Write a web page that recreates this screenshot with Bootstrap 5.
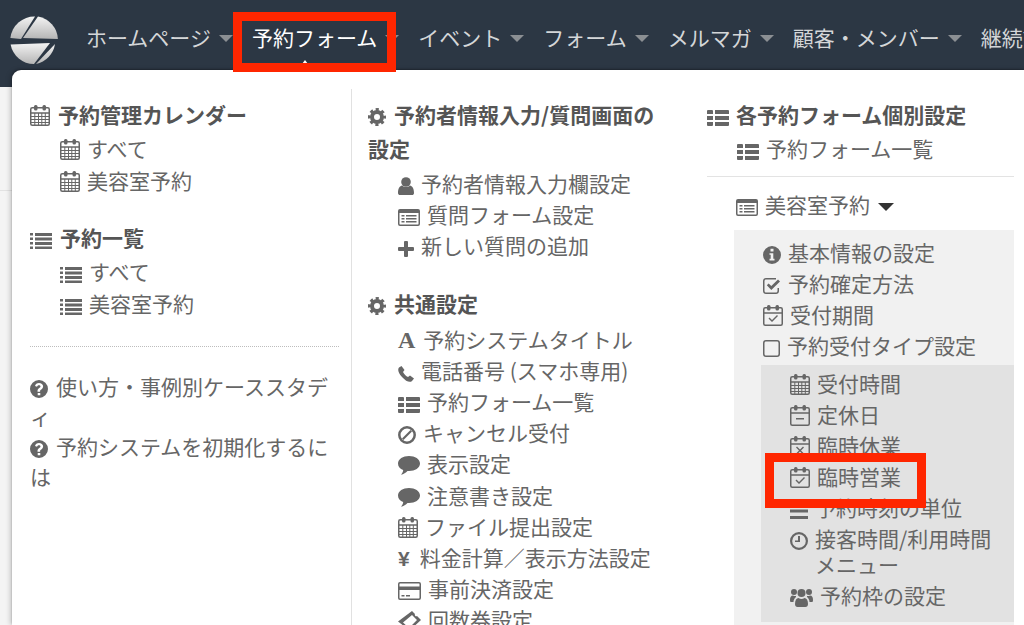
<!DOCTYPE html>
<html lang="ja">
<head>
<meta charset="utf-8">
<title>予約フォーム</title>
<link href="https://cdn.jsdelivr.net/npm/bootstrap@5.3.0/dist/css/bootstrap.min.css" rel="stylesheet">
<style>
html,body{height:625px;overflow:hidden}
body{background:#f4f4f4;font-family:"Noto Sans CJK JP","Liberation Sans",sans-serif;font-size:21px;color:#666;position:relative}
.topbar{height:87px;background:#2c3744;padding:0 0 0 10px;align-items:flex-start;flex-wrap:nowrap;border:0;overflow:hidden}
.logo-mark{margin-top:16px;flex:none}
.topnav{margin-left:28px;margin-top:16px;flex-wrap:nowrap;white-space:nowrap}
.navbar-expand .topnav .nav-link{color:#d4d6d8;font-size:21px;line-height:42px;padding:0;display:flex;align-items:center}
.navbar-expand .topnav .nav-link.active{color:#fff}
.topnav .nav-link::after{border-top:7px solid #8b8f93;border-left:7px solid transparent;border-right:7px solid transparent;border-bottom:0;margin:3px 19px 0 8px;vertical-align:0}
.page-rule{position:absolute;top:190px;left:0;width:12px;border-top:1px solid #e2e2e2}
.mega{position:absolute;display:block;top:70px;left:12px;width:1012px;height:555px;margin:0;background:#fff;border:0;border-radius:9px 0 0 0;padding:19px 0 0;box-shadow:-2px 0 5px rgba(0,0,0,.18),0 -1px 2px rgba(0,0,0,.25);color:#666;font-size:21px;overflow:hidden}
.mega-row{display:flex;align-items:flex-start}
.pane-a{width:340px;padding:8px 13px 0 18px;border-right:1px solid #e1e1e1;height:600px;flex:none}
.pane-b{width:355px;padding:8px 32px 0 16px;flex:none}
.pane-c{width:317px;padding:8px 0 0 0;flex:none}
.mega-head{font-weight:700;color:#555;line-height:34px;margin:0;font-size:21px}
.mega-list{list-style:none;margin:2px 0 0;padding:0 0 0 30px;line-height:31.5px}
.mega-list li{white-space:nowrap}
.gap-after{margin-bottom:24px}
.pane-b .mega-list{margin-top:4px;line-height:31.2px}
.pane-b .gap-after{margin-top:3px;margin-bottom:24px}
.dots{border-top:1px dotted #bdbdbd;margin:27px 0 24px;width:309px;opacity:1}
.help-line{line-height:30px;margin:0;width:306px}
.ic{display:inline-block;vertical-align:-3px;margin-right:8px;fill:#666;color:#666;overflow:visible}
.mega-list .ic,.pane-c .ic{margin-right:7px}
.font-a{font-family:"Liberation Serif",serif;font-weight:700;font-size:24px;line-height:1;margin-right:8px;color:#666}
.font-y{font-family:"Liberation Sans",sans-serif;font-weight:700;font-size:21px;line-height:1;margin-right:10px}
.rule-c{border-top:1px solid #e3e3e3;margin:11px 10px 12px 0;opacity:1}
.form-name{padding-left:29px;line-height:31px;margin:0 0 9px}
.tri{display:inline-block;border-top:8px solid #333;border-left:8px solid transparent;border-right:8px solid transparent;margin-left:8px;vertical-align:2px}
.box-one{margin-left:27px;width:280px;background:#f1f1f1;padding:7px 0 0 0;margin-top:10px;height:420px}
.box-one .top-items{list-style:none;margin:0;padding:0 0 0 29px;line-height:31px}
.box-one .box-two{background:#e2e2e2;margin:4px 0 0 27px;height:257px;padding:3px 14px 0 29px;list-style:none;line-height:31.2px;width:253px}
.box-two .box-item{padding-left:25px;text-indent:-25px;line-height:26px;margin:1px 0 3px}
.box-two .box-item .ic{text-indent:0}
.red-frame{position:absolute;border:9px solid #ff2600;pointer-events:none;z-index:1100}
.frame-nav{left:233px;top:12px;width:163px;height:60px}
.frame-item{left:765px;top:453px;width:161px;height:55px}
.nub{position:absolute;left:302px;top:60px;border-bottom:4px solid #fff;border-left:3px solid transparent;border-right:3px solid transparent;z-index:1050}
</style>
</head>
<body>
<svg width="0" height="0" class="d-block position-absolute">
<defs>
<linearGradient id="lg" x1="0" y1="0" x2="0" y2="1"><stop offset="0" stop-color="#f3f3f3"/><stop offset="1" stop-color="#b5b5b5"/></linearGradient>
<g id="cal-frame" fill="none" stroke="currentColor" stroke-width="1.500"><rect x=".75" y="2.750" width="18.500" height="17.500" rx="1.500"/><path d="M.75 8h18.500"/></g>
<g id="cal-rings"><rect x="4" y="0" width="3.500" height="5.500" rx="1.500"/><rect x="12.500" y="0" width="3.500" height="5.500" rx="1.500"/></g>
<symbol id="i-cal" viewBox="0 0 20 21"><use href="#cal-frame"/><use href="#cal-rings"/><path d="M4.300 8h1v12h-1zM8 8h1v12H8zM11.300 8h1v12h-1zM14.800 8h1v12h-1zM1 11h18v1H1zM1 14h18v1H1zM1 17h18v1H1z"/></symbol>
<symbol id="i-calcheck" viewBox="0 0 20 21"><use href="#cal-frame"/><use href="#cal-rings"/><path d="M5.500 13.500l1-1 2.500 2.500 5-5 1 1-6 6z"/></symbol>
<symbol id="i-calminus" viewBox="0 0 20 21"><use href="#cal-frame"/><use href="#cal-rings"/><path d="M6 13h8v1.500H6z"/></symbol>
<symbol id="i-calx" viewBox="0 0 20 21"><use href="#cal-frame"/><use href="#cal-rings"/><path d="M7 10.500l3 3 3-3 1 1-3 3 3 3-1 1-3-3-3 3-1-1 3-3-3-3z"/></symbol>
<symbol id="i-thlist" viewBox="0 0 22 16"><path d="M1 0h4a1 1 0 0 1 1 1v3H0V1a1 1 0 0 1 1-1zM8 0h13a1 1 0 0 1 1 1v3H8zM0 6h6v4H0zM8 6h14v4H8zM0 12h6v3a1 1 0 0 1-1 1H1a1 1 0 0 1-1-1zM8 12h14v3a1 1 0 0 1-1 1H8z"/></symbol>
<symbol id="i-list" viewBox="0 0 22 16"><path d="M0 0h3v2.500H0zM5 0h17v3H5zM0 4.500h3V7H0zM5 4.500h17v3H5zM0 9h3v2.500H0zM5 9h17v3H5zM0 13.500h3V16H0zM5 13.500h17V16H5z"/></symbol>
<symbol id="i-cog" viewBox="0 0 18 18"><circle cx="9" cy="9" r="5" fill="none" stroke="currentColor" stroke-width="4"/><circle cx="9" cy="9" r="7.500" fill="none" stroke="currentColor" stroke-width="3" stroke-dasharray="3.100 2.790" stroke-dashoffset="1.550"/></symbol>
<symbol id="i-user" viewBox="0 0 16 18"><circle cx="8" cy="5" r="4.800"/><path d="M0 16c0-5 2-7 4-7.500 2.500 2 5.500 2 8 0 2 .5 4 2.500 4 7.500 0 1.500-1 2-2 2H2c-1 0-2-.5-2-2z"/></symbol>
<symbol id="i-alt" viewBox="0 0 22 17"><path fill-rule="evenodd" d="M2 0h18a2 2 0 0 1 2 2v13a2 2 0 0 1-2 2H2a2 2 0 0 1-2-2V2a2 2 0 0 1 2-2zM1.500 4v11c0 .3.200.5.500.5h18c.3 0 .5-.2.500-.5V4z"/><path d="M3.500 6h3v1.500h-3zM8 6h10.500v1.500H8zM3.500 9h3v1.500h-3zM8 9h10.500v1.500H8zM3.500 12h3v1.500h-3zM8 12h10.500v1.500H8z"/></symbol>
<symbol id="i-plus" viewBox="0 0 16 16"><path d="M6 1a1 1 0 0 1 1-1h2a1 1 0 0 1 1 1v5h5a1 1 0 0 1 1 1v2a1 1 0 0 1-1 1h-5v5a1 1 0 0 1-1 1H7a1 1 0 0 1-1-1v-5H1a1 1 0 0 1-1-1V7a1 1 0 0 1 1-1h5z"/></symbol>
<symbol id="i-phone" viewBox="0 0 16 16"><path d="M3.500 0L1 1.500C-.5 3 0 6.500 4 11s8 6 10 4l2-2.500-4-3-2 1.500C8 10.500 6 8 5 6l1.500-2z"/></symbol>
<symbol id="i-ban" viewBox="0 0 18 18"><circle cx="9" cy="9" r="7.700" fill="none" stroke="currentColor" stroke-width="2.500"/><path d="M4 12.500L12.500 4l1.500 1.500L5.500 14z"/></symbol>
<symbol id="i-comment" viewBox="0 0 22 19"><path d="M11 0c6 0 11 3 11 7.500S17 15 11 15h-1.500c-1.500 1.500-4 3.300-6.500 3.800 1-1 2-2.500 2.200-4.700C2 13 0 10.500 0 7.500 0 3 5 0 11 0z"/></symbol>
<symbol id="i-card" viewBox="0 0 23 18"><path fill-rule="evenodd" d="M2 0h19a2 2 0 0 1 2 2v14a2 2 0 0 1-2 2H2a2 2 0 0 1-2-2V2a2 2 0 0 1 2-2zM1.500 8v8c0 .3.200.5.500.5h19c.3 0 .5-.2.500-.5V8zM1.500 2v2.500h20V2c0-.3-.2-.5-.5-.5H2c-.3 0-.5.200-.5.500z"/><path d="M3.500 13h3v1.500h-3zM8 13h4v1.500H8z"/></symbol>
<symbol id="i-ticket" viewBox="0 0 23 20"><path fill-rule="evenodd" d="M14 0l3 3c-.8 1.200.8 3 2 2l4 4-12 11-3-3c.8-1.500-1-3-2.500-2.300L0 10.500zM14 4L5 11.500l6 5.500 8-8z"/></symbol>
<symbol id="i-q" viewBox="0 0 18 18"><path fill-rule="evenodd" d="M9 0a9 9 0 1 1 0 18A9 9 0 0 1 9 0zM7.700 13v2.300h2.600V13zM9 3C6.800 3 5.500 4.200 5 6l2 .8c.3-1 .900-1.600 1.900-1.600s1.600.5 1.600 1.200c0 1.500-3 1.700-3 4.600v.7h2.600v-.5c0-1.600 3-2 3-4.900C13.100 4.300 11.200 3 9 3z"/></symbol>
<symbol id="i-info" viewBox="0 0 18 18"><path fill-rule="evenodd" d="M9 0a9 9 0 1 1 0 18A9 9 0 0 1 9 0zM7.500 2.800v2.700h3V2.800zM6.500 7.200v1.600h1.200v4H6.500v1.800h5v-1.800h-1.200V7.200z"/></symbol>
<symbol id="i-check" viewBox="0 0 18 18"><path d="M3 1h10v1.500H3c-.8 0-1.500.7-1.500 1.500v10c0 .8.700 1.500 1.500 1.500h10c.8 0 1.500-.7 1.500-1.500v-3H16v3c0 1.700-1.300 3-3 3H3c-1.700 0-3-1.300-3-3V4c0-1.700 1.300-3 3-3z"/><path d="M3.800 8.200l1.800-1.800 2.700 2.700L15 2.400l2 2-8.700 8.700z"/></symbol>
<symbol id="i-square" viewBox="0 0 17 17"><path fill-rule="evenodd" d="M3 0h11a3 3 0 0 1 3 3v11a3 3 0 0 1-3 3H3a3 3 0 0 1-3-3V3a3 3 0 0 1 3-3zM3 1.500C2.200 1.500 1.500 2.200 1.500 3v11c0 .8.700 1.500 1.500 1.500h11c.8 0 1.500-.7 1.500-1.500V3c0-.8-.7-1.500-1.500-1.500z"/></symbol>
<symbol id="i-bars" viewBox="0 0 18 16"><path d="M0 0h18v3H0zM0 6.500h18v3H0zM0 13h18v3H0z"/></symbol>
<symbol id="i-clock" viewBox="0 0 18 18"><path fill-rule="evenodd" d="M9 0a9 9 0 1 1 0 18A9 9 0 0 1 9 0zM9 2.200a6.800 6.800 0 1 0 0 13.600A6.800 6.800 0 0 0 9 2.200z"/><path d="M8 4h2v6H5V8.500h3z"/></symbol>
<symbol id="i-users" viewBox="0 0 23 19"><circle cx="11.500" cy="5" r="4"/><circle cx="4" cy="4" r="3"/><circle cx="19" cy="4" r="3"/><path d="M0 12c0-3 1-4.500 3-4.500 1 .6 2 .7 3 .5v1c-1.500 1-2.500 3-2.500 5H1c-.6 0-1-.5-1-2zM23 12c0-3-1-4.500-3-4.500-1 .6-2 .7-3 .5v1c1.500 1 2.500 3 2.500 5H22c.6 0 1-.5 1-2zM5 16c0-4 1.500-6 3.500-6 2 1.300 4 1.300 6 0 2 0 3.500 2 3.500 6 0 2-1 3-2.500 3h-8C6 19 5 18 5 16z"/></symbol>
<symbol id="i-logo" viewBox="0 0 48 48"><g fill="url(#lg)"><path d="M25 .5L11 23 .4 22A24 24 0 0 1 25 .5z"/><path d="M28 .6L13 22l34.900 1A24 24 0 0 0 28 .6z"/><path d="M.6 28.500L40 27 24 48A24 24 0 0 1 .6 28.500z"/><path d="M45 28L26 47.900A24 24 0 0 0 45 28z"/></g></symbol>
</defs>
</svg>

<nav class="navbar navbar-expand topbar">
  <svg class="logo-mark" width="48" height="48"><use href="#i-logo"/></svg>
  <ul class="navbar-nav topnav">
    <li class="nav-item dropdown"><a class="nav-link dropdown-toggle" href="#">ホームページ</a></li>
    <li class="nav-item dropdown"><a class="nav-link dropdown-toggle active" href="#">予約フォーム</a></li>
    <li class="nav-item dropdown"><a class="nav-link dropdown-toggle" href="#">イベント</a></li>
    <li class="nav-item dropdown"><a class="nav-link dropdown-toggle" href="#">フォーム</a></li>
    <li class="nav-item dropdown"><a class="nav-link dropdown-toggle" href="#">メルマガ</a></li>
    <li class="nav-item dropdown"><a class="nav-link dropdown-toggle" href="#">顧客・メンバー</a></li>
    <li class="nav-item dropdown"><a class="nav-link dropdown-toggle" href="#">継続課金</a></li>
  </ul>
</nav>
<div class="page-rule"></div>
<div class="nub"></div>

<div class="dropdown-menu show mega">
  <div class="mega-row">
    <div class="pane-a">
      <h6 class="mega-head"><svg class="ic" width="20" height="21"><use href="#i-cal"/></svg>予約管理カレンダー</h6>
      <ul class="mega-list gap-after">
        <li><svg class="ic" width="20" height="21"><use href="#i-cal"/></svg>すべて</li>
        <li><svg class="ic" width="20" height="21"><use href="#i-cal"/></svg>美容室予約</li>
      </ul>
      <h6 class="mega-head"><svg class="ic" width="22" height="16"><use href="#i-list"/></svg>予約一覧</h6>
      <ul class="mega-list">
        <li><svg class="ic" width="22" height="16"><use href="#i-list"/></svg>すべて</li>
        <li><svg class="ic" width="22" height="16"><use href="#i-list"/></svg>美容室予約</li>
      </ul>
      <hr class="dots">
      <p class="help-line"><svg class="ic" width="18" height="18"><use href="#i-q"/></svg>使い方・事例別ケーススタディ</p>
      <p class="help-line"><svg class="ic" width="18" height="18"><use href="#i-q"/></svg>予約システムを初期化するには</p>
    </div>
    <div class="pane-b">
      <h6 class="mega-head"><svg class="ic" width="18" height="18"><use href="#i-cog"/></svg>予約者情報入力/質問画面の設定</h6>
      <ul class="mega-list gap-after">
        <li><svg class="ic" width="16" height="18"><use href="#i-user"/></svg>予約者情報入力欄設定</li>
        <li><svg class="ic" width="22" height="17"><use href="#i-alt"/></svg>質問フォーム設定</li>
        <li><svg class="ic" width="16" height="16"><use href="#i-plus"/></svg>新しい質問の追加</li>
      </ul>
      <h6 class="mega-head"><svg class="ic" width="18" height="18"><use href="#i-cog"/></svg>共通設定</h6>
      <ul class="mega-list">
        <li><span class="font-a">A</span>予約システムタイトル</li>
        <li><svg class="ic" width="16" height="16"><use href="#i-phone"/></svg>電話番号 (スマホ専用)</li>
        <li><svg class="ic" width="22" height="16"><use href="#i-thlist"/></svg>予約フォーム一覧</li>
        <li><svg class="ic" width="18" height="18"><use href="#i-ban"/></svg>キャンセル受付</li>
        <li><svg class="ic" width="22" height="19"><use href="#i-comment"/></svg>表示設定</li>
        <li><svg class="ic" width="22" height="19"><use href="#i-comment"/></svg>注意書き設定</li>
        <li><svg class="ic" width="20" height="21"><use href="#i-cal"/></svg>ファイル提出設定</li>
        <li><span class="font-y">¥</span>料金計算／表示方法設定</li>
        <li><svg class="ic" width="23" height="18"><use href="#i-card"/></svg>事前決済設定</li>
        <li><svg class="ic" width="23" height="20"><use href="#i-ticket"/></svg>回数券設定</li>
      </ul>
    </div>
    <div class="pane-c">
      <h6 class="mega-head"><svg class="ic" width="22" height="16"><use href="#i-thlist"/></svg>各予約フォーム個別設定</h6>
      <ul class="mega-list">
        <li><svg class="ic" width="22" height="16"><use href="#i-thlist"/></svg>予約フォーム一覧</li>
      </ul>
      <hr class="rule-c">
      <p class="form-name"><svg class="ic" width="22" height="17"><use href="#i-alt"/></svg>美容室予約<span class="tri"></span></p>
      <div class="box-one">
        <ul class="top-items">
          <li><svg class="ic" width="18" height="18"><use href="#i-info"/></svg>基本情報の設定</li>
          <li><svg class="ic" width="18" height="18"><use href="#i-check"/></svg>予約確定方法</li>
          <li><svg class="ic" width="20" height="21"><use href="#i-calcheck"/></svg>受付期間</li>
          <li><svg class="ic" width="17" height="17"><use href="#i-square"/></svg>予約受付タイプ設定</li>
        </ul>
        <ul class="box-two">
          <li><svg class="ic" width="20" height="21"><use href="#i-cal"/></svg>受付時間</li>
          <li><svg class="ic" width="20" height="21"><use href="#i-calminus"/></svg>定休日</li>
          <li><svg class="ic" width="20" height="21"><use href="#i-calx"/></svg>臨時休業</li>
          <li><svg class="ic" width="20" height="21"><use href="#i-calcheck"/></svg>臨時営業</li>
          <li><svg class="ic" width="18" height="16"><use href="#i-bars"/></svg>予約時刻の単位</li>
          <li class="box-item"><svg class="ic" width="18" height="18"><use href="#i-clock"/></svg>接客時間/利用時間メニュー</li>
          <li><svg class="ic" width="23" height="19"><use href="#i-users"/></svg>予約枠の設定</li>
        </ul>
      </div>
    </div>
  </div>
</div>
<div class="red-frame frame-nav"></div>
<div class="red-frame frame-item"></div>
<script src="https://cdn.jsdelivr.net/npm/bootstrap@5.3.0/dist/js/bootstrap.bundle.min.js"></script>
</body>
</html>
